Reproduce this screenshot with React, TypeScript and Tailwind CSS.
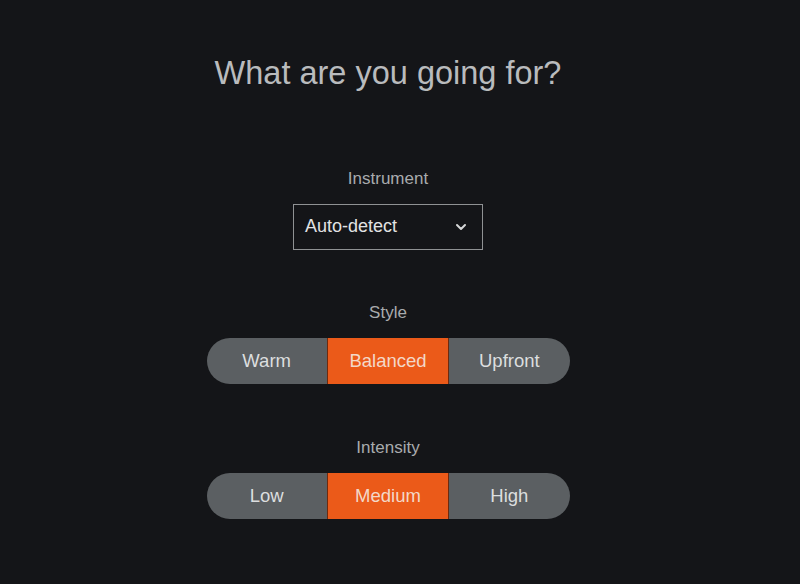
import { ChevronDown } from 'lucide-react';

const font = { fontFamily: '"Liberation Sans", Arial, sans-serif' };

interface SegmentedProps {
  label: string;
  options: string[];
  active: number;
}

function Segmented({ label, options, active }: SegmentedProps) {
  return (
    <div className="flex flex-col items-center">
      <div className="text-[17px] text-[#a9abad] leading-none">{label}</div>
      <div className="mt-[17px] flex w-[363px] h-[46px] rounded-full overflow-hidden bg-[#5b5f62]">
        {options.map((opt, i) =>
          i === active ? (
            <div
              key={opt}
              className="flex-1 flex items-center justify-center bg-[#eb5a19] border-x border-[#6e2a0e] text-[18.5px] text-[#f3d8c8]"
            >
              {opt}
            </div>
          ) : (
            <div key={opt} className="flex-1 flex items-center justify-center text-[18.5px] text-[#dcdedf]">
              {opt}
            </div>
          )
        )}
      </div>
    </div>
  );
}

export default function App() {
  return (
    <div className="w-[800px] h-[584px] bg-[#141518] overflow-hidden" style={font}>
      <div className="flex flex-col items-center pr-[24px] pt-[57px]">
        <h1 className="text-[32.5px] leading-none text-[#b9bbbd]">What are you going for?</h1>

        <div className="mt-[80px] flex flex-col items-center">
          <div className="text-[17px] text-[#a9abad] leading-none">Instrument</div>
          <div className="mt-[17px] w-[190px] h-[46px] border border-[#8f9193] flex items-center justify-between pl-[11px] pr-[13px]">
            <span className="text-[18px] text-[#e2e3e4]">Auto-detect</span>
            <ChevronDown size={16} strokeWidth={3} className="text-[#d6d7d8]" />
          </div>
        </div>

        <div className="mt-[54px]">
          <Segmented label="Style" options={['Warm', 'Balanced', 'Upfront']} active={1} />
        </div>

        <div className="mt-[55px]">
          <Segmented label="Intensity" options={['Low', 'Medium', 'High']} active={1} />
        </div>
      </div>
    </div>
  );
}
